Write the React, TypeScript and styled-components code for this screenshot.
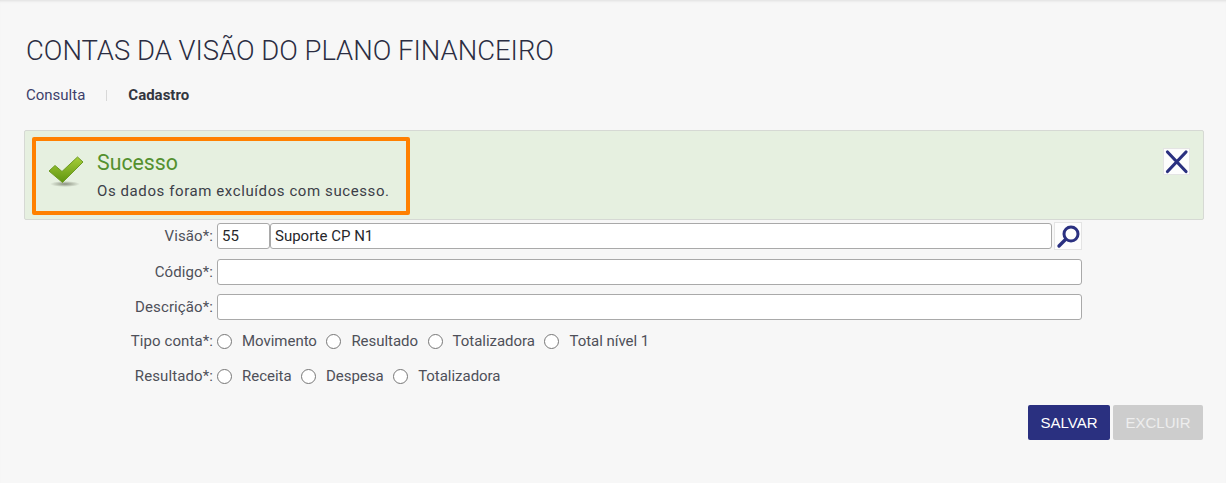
import React from "react";
import styled, { createGlobalStyle } from "styled-components";

const GlobalStyle = createGlobalStyle`
  html, body {
    margin: 0;
    padding: 0;
    background: #f7f7f7;
    font-family: Roboto, "Liberation Sans", sans-serif;
  }
  * { box-sizing: border-box; }
`;

const Page = styled.div`
  width: 1226px;
  height: 483px;
  overflow: hidden;
  padding: 0 22px 0 24px;
  background: #f7f7f7;
  box-shadow: inset 0 3px 3px -2px rgba(0, 0, 0, 0.1);
`;

const Title = styled.h1`
  margin: 0;
  padding: 35px 0 0 2px;
  height: 68px;
  font-size: 27.45px;
  line-height: 32px;
  font-weight: 300;
  white-space: nowrap;
  color: #2b2d42;
`;

const Tabs = styled.div`
  display: flex;
  align-items: center;
  height: 16px;
  margin-top: 19px;
  padding-left: 2px;
`;

const Tab = styled.span<{ $active?: boolean }>`
  font-size: 15px;
  line-height: 16px;
  font-weight: ${(p) => (p.$active ? 700 : 400)};
  color: ${(p) => (p.$active ? "#33363f" : "#3d3f6b")};
`;

const TabDivider = styled.span`
  width: 1px;
  height: 11px;
  margin: 0 21px;
  background: #d8d8d8;
`;

const Alert = styled.div`
  display: flex;
  justify-content: space-between;
  align-items: flex-start;
  height: 90px;
  margin-top: 27px;
  padding: 6px 13px 0 7px;
  background: #e6f0e0;
  border: 1px solid #d6d9d4;
  border-radius: 2px;
`;

const AlertBody = styled.div`
  display: flex;
  align-items: flex-start;
  width: 378px;
  height: 78px;
  padding: 0 0 0 12px;
  border: 4px solid #ff8000;
  border-radius: 2px;
`;

const CheckIcon = styled.svg`
  width: 38px;
  height: 34px;
  margin-top: 13px;
  flex: none;
`;

const AlertText = styled.div`
  margin-left: 11px;
  padding-top: 10px;
`;

const AlertTitle = styled.div`
  font-size: 21.3px;
  line-height: 24px;
  color: #54902f;
`;

const AlertMessage = styled.div`
  margin-top: 7px;
  font-size: 15px;
  line-height: 18px;
  letter-spacing: 0.59px;
  color: #3c3e48;
`;

const IconButton = styled.button<{ $size: number }>`
  display: flex;
  align-items: center;
  justify-content: center;
  flex: none;
  width: ${(p) => p.$size}px;
  height: ${(p) => p.$size}px;
  padding: 0;
  background: #fdfdfd;
  border: 1px solid #e4e4e4;
`;

const CloseButton = styled(IconButton)`
  margin-top: 11px;
`;

const Form = styled.form`
  display: grid;
  grid-template-columns: 193px 865px;
  margin: 3px 0 0 0;
`;

const Label = styled.label`
  height: 26px;
  padding-right: 4px;
  text-align: right;
  font-size: 15px;
  line-height: 26px;
  letter-spacing: 0.1px;
  color: #4e5059;
`;

const Control = styled.div`
  display: flex;
  align-items: center;
  height: 26px;
`;

const Gap = styled.div<{ $h: number }>`
  grid-column: 1 / -1;
  height: ${(p) => p.$h}px;
`;

const TextInput = styled.input`
  flex: 1;
  min-width: 0;
  height: 26px;
  padding: 0 4px;
  background: #fff;
  border: 1px solid #a9a9a9;
  border-radius: 3px;
  outline: none;
  font-family: Roboto, "Liberation Sans", sans-serif;
  font-size: 15px;
  color: #26272b;
`;

const CodeInput = styled(TextInput)`
  flex: none;
  width: 53px;
`;

const SearchButton = styled(IconButton)`
  margin-left: 2px;
`;

const RadioCircle = styled.span`
  flex: none;
  width: 15px;
  height: 15px;
  background: #fff;
  border: 1px solid #777;
  border-radius: 50%;
`;

const RadioLabel = styled.span`
  margin: 0 9.5px 0 10px;
  font-size: 15px;
  line-height: 26px;
  letter-spacing: -0.03px;
  color: #4e5059;
`;

const Actions = styled.div`
  display: flex;
  justify-content: flex-end;
  gap: 3px;
  margin: 16px 1px 0 0;
`;

const ActionButton = styled.button<{ $disabled?: boolean }>`
  height: 35px;
  width: ${(p) => (p.$disabled ? 90 : 82)}px;
  padding: 0;
  border: none;
  border-radius: 2px;
  background: ${(p) => (p.$disabled ? "#cdcdcd" : "#2a3080")};
  color: ${(p) => (p.$disabled ? "#eeeeee" : "#ffffff")};
  font-family: "Liberation Sans", Arial, sans-serif;
  font-size: 15px;
`;

const Radios = ({ options }: { options: string[] }) => (
  <Control>
    {options.map((option) => (
      <React.Fragment key={option}>
        <RadioCircle />
        <RadioLabel>{option}</RadioLabel>
      </React.Fragment>
    ))}
  </Control>
);

const App: React.FC = () => (
  <Page>
    <GlobalStyle />
    <Title>CONTAS DA VISÃO DO PLANO FINANCEIRO</Title>
    <Tabs>
      <Tab>Consulta</Tab>
      <TabDivider />
      <Tab $active>Cadastro</Tab>
    </Tabs>
    <Alert>
      <AlertBody>
        <CheckIcon viewBox="0 0 38 34">
          <defs>
            <linearGradient id="chk" x1="0" y1="0" x2="0" y2="1">
              <stop offset="0" stopColor="#a6ce39" />
              <stop offset="1" stopColor="#5f9410" />
            </linearGradient>
            <radialGradient id="shadow">
              <stop offset="0" stopColor="#6b705f" stopOpacity="0.75" />
              <stop offset="1" stopColor="#6b705f" stopOpacity="0" />
            </radialGradient>
          </defs>
          <ellipse cx="17" cy="30" rx="15" ry="3" fill="url(#shadow)" />
          <path
            d="M1 17 L7 11.5 L14 17.5 L29.5 3 L35 8 L14.5 28.5 Z"
            fill="url(#chk)"
            stroke="#6c9a22"
            strokeWidth="1"
            strokeLinejoin="round"
          />
        </CheckIcon>
        <AlertText>
          <AlertTitle>Sucesso</AlertTitle>
          <AlertMessage>Os dados foram excluídos com sucesso.</AlertMessage>
        </AlertText>
      </AlertBody>
      <CloseButton type="button" $size={27}>
        <svg width="25" height="25" viewBox="0 0 25 25">
          <path d="M3.5 3 L22 22.5 M22 3 L3.5 22.5" stroke="#2a3080" strokeWidth="3.2" strokeLinecap="round" />
        </svg>
      </CloseButton>
    </Alert>
    <Form>
      <Label>Visão*:</Label>
      <Control>
        <CodeInput defaultValue="55" />
        <TextInput defaultValue="Suporte CP N1" />
        <SearchButton type="button" $size={28}>
          <svg width="26" height="26" viewBox="0 0 26 26">
            <circle cx="16" cy="11" r="7" fill="none" stroke="#2a3080" strokeWidth="3" />
            <path d="M10.5 16.5 L4 23" stroke="#2a3080" strokeWidth="3.4" strokeLinecap="round" />
          </svg>
        </SearchButton>
      </Control>
      <Gap $h={10} />
      <Label>Código*:</Label>
      <Control>
        <TextInput />
      </Control>
      <Gap $h={9} />
      <Label>Descrição*:</Label>
      <Control>
        <TextInput />
      </Control>
      <Gap $h={8} />
      <Label>Tipo conta*:</Label>
      <Radios options={["Movimento", "Resultado", "Totalizadora", "Total nível 1"]} />
      <Gap $h={9} />
      <Label>Resultado*:</Label>
      <Radios options={["Receita", "Despesa", "Totalizadora"]} />
    </Form>
    <Actions>
      <ActionButton type="button">SALVAR</ActionButton>
      <ActionButton type="button" $disabled>
        EXCLUIR
      </ActionButton>
    </Actions>
  </Page>
);

export default App;
